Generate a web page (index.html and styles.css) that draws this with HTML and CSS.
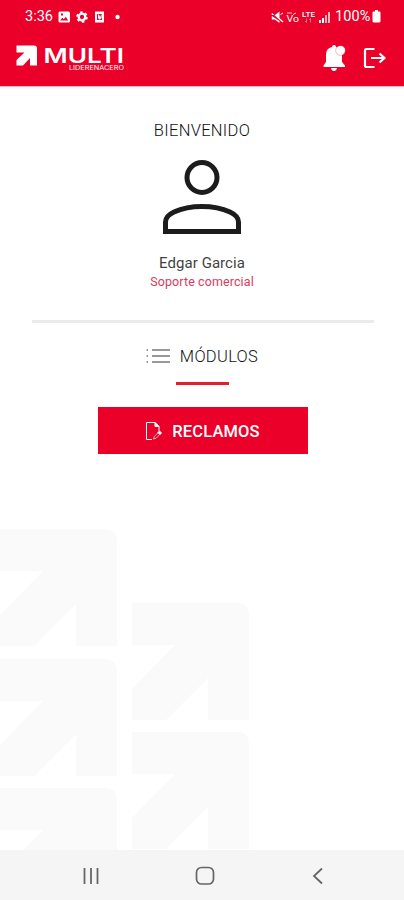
FILE: index.html
```
<!DOCTYPE html>
<html lang="es">
<head>
<meta charset="utf-8">
<title>Multi</title>
<link rel="stylesheet" href="styles.css">
</head>
<body>
<div class="screen">
  <header class="header">
    <div class="status">
      <span class="time">3:36</span>
      <svg class="status-left" width="64" height="14" viewBox="0 0 64 14" fill="#fff">
        <path fill-rule="evenodd" d="M2 1.500h8.500q1.500 0 1.500 1.500v8q0 1.500-1.500 1.500H2Q.5 12.500.5 11V3Q.5 1.500 2 1.500zM2.200 10.500h8L7.800 6.800 5.800 9.200 4.300 7.800zM3 3.500v2h2v-2z"/>
        <circle cx="24" cy="7" r="3.300" fill="none" stroke="#fff" stroke-width="2.300"/>
        <circle cx="24" cy="7" r="4.900" fill="none" stroke="#fff" stroke-width="1.800" stroke-dasharray="2.500 2.630"/>
        <path fill-rule="evenodd" d="M37 1.500h9v11h-9zM39 4v6h5V4zM40 4.500h1l.8 2h1V4.500h.8v3.500l-1.500 1.500h-1L40 8z"/>
        <circle cx="59.500" cy="7" r="2.200"/>
      </svg>
      <svg class="status-right" width="62" height="14" viewBox="0 0 62 14" fill="#fff">
        <path d="M.8 5h3.200l4.500-3.500V8l4 3.500-1 1L.8 2.800zM.8 6v3.500h3L8.500 13V11z"/>
        <path d="M9.500 4.500L12 3" stroke="#fff"/>
        <text x="15.500" y="11.500" font-size="8.500" textLength="12.500" lengthAdjust="spacingAndGlyphs">Vo</text>
        <text x="31" y="6.500" font-size="6.500" font-weight="500" textLength="13" lengthAdjust="spacingAndGlyphs">LTE</text>
        <path d="M16 3h5M22 4.500l3-1.500" stroke="#fff" stroke-width=".8"/>
        <path d="M35.500 8.500v4M34 11l1.500 1.500M39.500 12.500v-4M38 10l1.500-1.500" stroke="#fff" stroke-width=".8" fill="none" opacity=".55"/>
        <path d="M48 10h2v3h-2zM51 8h2v5h-2z"/>
        <path d="M54 5h2v8h-2zM57 2h2v11h-2z" opacity=".7"/>
      </svg>
      <span class="percent">100%</span>
      <svg class="battery" width="9" height="13" viewBox="0 0 9 13"><path fill="#fff" d="M3 0h3v1.500h1.500q1 0 1 1V11q0 1.500-1.500 1.500H2Q.5 12.500.5 11V2.500q0-1 1-1H3z"/></svg>
    </div>
    <div class="appbar">
      <svg class="logo" width="110" height="30" viewBox="0 0 110 30" fill="#fff">
        <path d="M.5 2.500H18q3 0 3 3V22.500h-7V15L7 22.500H.5V17L8.500 9.500H.5z"/>
        <text class="brand" x="27.500" y="20" textLength="80.500" lengthAdjust="spacingAndGlyphs">MULTI</text>
        <text class="tagline" x="53" y="27.300" textLength="55" lengthAdjust="spacingAndGlyphs">LIDERENACERO</text>
      </svg>
      <svg class="bell" width="24" height="28" viewBox="0 0 24 28" fill="#fff">
        <path d="M9 3q0-2 2-2t2 2q5 1 6 7v8l3 3.500V23H.5v-1.500L3 18v-7q0-7 6-8zM8 24h6q-.5 3-3 3t-3-3z"/>
        <circle cx="17.500" cy="6.500" r="4.800" stroke="#ea0029" stroke-width=".3"/>
      </svg>
      <svg class="logout" width="24" height="22" viewBox="0 0 24 22" fill="none" stroke="#fff" stroke-width="2.200">
        <path d="M11.500 2H3.500Q2 2 2 3.500v15q0 1.500 1.500 1.500h8M8 11h13M16.500 6.500L21.500 11l-5 4.500"/>
      </svg>
    </div>
  </header>

  <main class="content">
    <svg class="pattern" width="250" height="322" viewBox="0 528 250 322" fill="#fafafa">
      <defs><path id="arrow" d="M0 0H104Q117 0 117 13V117H76V75L34 117H0V86L43 42H0z"/></defs>
      <use href="#arrow" x="0" y="529"/>
      <use href="#arrow" x="0" y="659"/>
      <use href="#arrow" x="0" y="788"/>
      <use href="#arrow" x="132" y="603"/>
      <use href="#arrow" x="132" y="732"/>
    </svg>
    <h1 class="welcome">BIENVENIDO</h1>
    <svg class="avatar" width="80" height="77" viewBox="0 0 80 77" fill="none" stroke="#1c1c1c" stroke-width="5">
      <circle cx="40" cy="18.500" r="15"/>
      <path d="M3.500 72.500V63Q3.500 57 12 53Q24 47.500 40 47.500T68 53Q76.500 57 76.500 63V72.500z"/>
    </svg>
    <div class="name">Edgar Garcia</div>
    <div class="role">Soporte comercial</div>
    <hr class="divider">
    <div class="modules">
      <svg width="24" height="16" viewBox="0 0 24 16" stroke="#999" stroke-width="1.800">
        <path d="M6 2h18M6 8h18M6 14h18M.5 2H2M.5 8H2M.5 14H2"/>
      </svg>
      <span class="modules-label">MÓDULOS</span>
    </div>
    <div class="underline"></div>
    <a class="button">
      <svg width="18" height="20" viewBox="0 0 18 20" fill="none" stroke="#fff" stroke-width="1">
        <path d="M7 18.500H1.500V1.500H10l4 4V10"/>
        <path d="M10 1.500v4h4zM13 11.500l1.500-1.500 2 2-1.500 1.500z" fill="#fff"/>
        <path d="M8.500 18l.8-2.500 4-4 1.700 1.700-4 4z" stroke-width=".7"/>
      </svg>
      <span class="button-label">RECLAMOS</span>
    </a>
  </main>

  <nav class="navbar">
    <svg width="18" height="18" viewBox="0 0 18 18" fill="none" stroke="#666" stroke-width="1.800"><path d="M2.500 1v16M9 1v16M15.500 1v16"/></svg>
    <svg width="20" height="20" viewBox="0 0 20 20" fill="none" stroke="#666" stroke-width="1.700"><rect x="1.500" y="1.500" width="17" height="16.500" rx="5"/></svg>
    <svg width="12" height="18" viewBox="0 0 12 18" fill="none" stroke="#666" stroke-width="1.800"><path d="M10 1.500L2 9l8 7.500"/></svg>
  </nav>
</div>
</body>
</html>
```
FILE: styles.css
```
body { margin: 0; background: #fff; font-family: Roboto, "Liberation Sans", sans-serif; }
svg { display: block; flex: none; }
.screen { width: 404px; height: 900px; display: flex; flex-direction: column; overflow: hidden; }
.header { height: 86px; flex: none; background: #ea0029; color: #fff; border-bottom: 1px solid #f9b5c0; box-sizing: content-box; }
.status { height: 33px; display: flex; align-items: center; padding-left: 25px; font-size: 14.5px; line-height: 33px; }
.time { width: 33px; }
.status-left { margin-right: 149px; }
.status-right { margin-right: 2px; }
.percent { width: 37px; font-size: 14.5px; letter-spacing: .1px; }
.appbar { display: flex; align-items: center; height: 50px; padding-left: 16px; }
.logo { margin-right: 197px; }
.brand { font-family: Inter, sans-serif; font-size: 20px; font-weight: 600; }
.tagline { font-family: Inter, sans-serif; font-size: 5.8px; }
.bell { margin-right: 16px; }
.content { flex: 1; min-height: 0; position: relative; display: flex; flex-direction: column; align-items: center; color: #444; }
.pattern { position: absolute; left: 0; bottom: 0; z-index: -1; }
.welcome { margin: 33px 0 0; font-size: 16.5px; font-weight: 300; line-height: 22px; letter-spacing: .3px; color: #111; }
.avatar { margin-top: 17px; }
.name { margin-top: 17px; font-size: 15px; line-height: 20px; letter-spacing: .05px; }
.role { font-size: 12.5px; line-height: 17px; letter-spacing: .1px; color: #dc3a5c; }
.divider { width: 342px; height: 3px; margin: 30px 0 0 2px; border: 0; background: #ebebeb; }
.modules { display: flex; align-items: center; gap: 10px; height: 24px; margin-top: 21px; }
.modules-label { font-size: 16.5px; font-weight: 300; letter-spacing: .3px; color: #111; }
.underline { width: 53px; height: 3px; margin-top: 14px; background: #e2202b; }
.button { display: flex; align-items: center; justify-content: center; gap: 9px; width: 210px; height: 47px; margin: 22px 0 0 1px; background: #ea0029; color: #fff; }
.button-label { font-size: 16.5px; font-weight: 500; letter-spacing: .15px; line-height: 20px; padding-top: 2px; }
.navbar { height: 50px; flex: none; display: flex; align-items: center; box-sizing: border-box; padding: 2px 80px 0 82px; justify-content: space-between; background: #f5f5f5; }
.navbar svg:nth-child(2) { margin-right: 3px; }
```
